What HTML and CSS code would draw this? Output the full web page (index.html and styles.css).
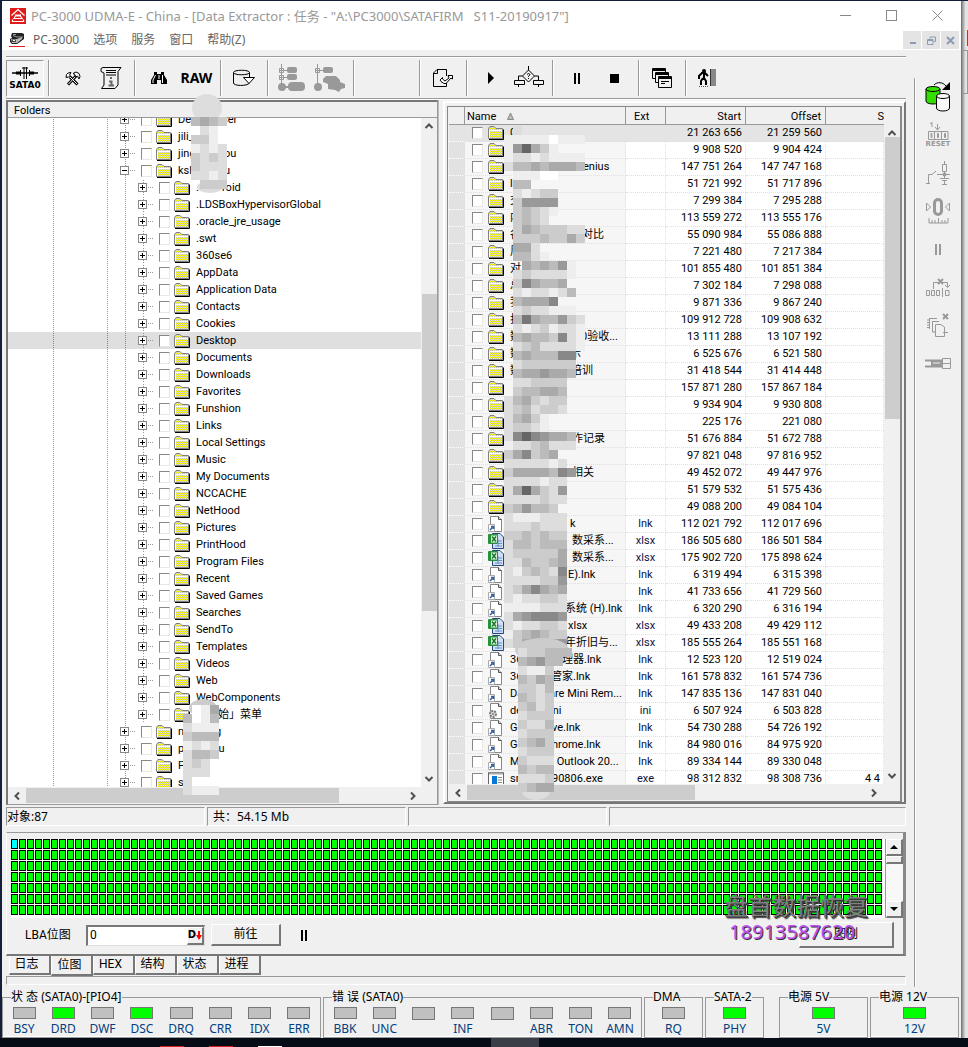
FILE: index.html
```
<!DOCTYPE html>
<html lang="zh-CN">
<head>
<meta charset="utf-8">
<title>PC-3000 UDMA-E</title>
<link rel="stylesheet" href="styles.css">
</head>
<body>
<svg class="defs" aria-hidden="true">
  <defs>
    <pattern id="dither" width="2" height="2" patternUnits="userSpaceOnUse"><rect width="2" height="2" fill="#c8c8b8"/><rect width="1" height="1" fill="#ffff00"/><rect x="1" y="1" width="1" height="1" fill="#ffff00"/></pattern>
    <pattern id="cells" width="8" height="11" patternUnits="userSpaceOnUse"><rect width="7" height="10" fill="#000"/><rect x="1" y="1" width="5" height="8" fill="#00ff00"/></pattern>
    <symbol id="folder" viewBox="0 0 16 14"><path d="M1 13.500H15.500V3.500" fill="none" stroke="#000" stroke-width="1"/><path d="M.5 12.500V2.500L2 .5H6L8 2.500H14.500V12.500Z" fill="url(#dither)" stroke="#808080"/><path d="M1.500 12V4.500H14" fill="none" stroke="#fff"/></symbol>
    <symbol id="lnk" viewBox="0 0 16 16"><path d="M2.500.5H10.500L13.500 3.500V15.500H2.500Z" fill="#fff" stroke="#888"/><path d="M10.500.5V3.500H13.500" fill="#ddd" stroke="#555"/><path d="M.5 8.500H6.500V15.500H.5Z" fill="#fff" stroke="#aaa"/><path d="M2 14 4.500 11.500M3 10.500H5.500V13" fill="none" stroke="#2c5fa8" stroke-width="1.500"/></symbol>
    <symbol id="ini" viewBox="0 0 16 16"><path d="M2.500.5H10.500L13.500 3.500V15.500H2.500Z" fill="#fff" stroke="#888"/><path d="M10.500.5V3.500H13.500" fill="#ddd" stroke="#555"/><circle cx="5" cy="11" r="3" fill="#ddd" stroke="#777" stroke-width="2" stroke-dasharray="2 1"/><circle cx="5" cy="11" r="1" fill="#777"/></symbol>
    <symbol id="xlsx" viewBox="0 0 16 16"><path d="M4.500.5H12L15.500 4V15.500H4.500Z" fill="#cfe0f7" stroke="#27457f"/><path d="M7 8H14M7 10.500H14M7 13H14M10 6V14" stroke="#6b8fc7"/><rect x="0" y="1" width="10" height="10" rx="1" fill="#27913a"/><rect x="3" y="2.500" width="6" height="7" fill="#e5f3e3"/><path d="M4 3.500 8 8.500M8 3.500 4 8.500" stroke="#17772a" stroke-width="1.500"/></symbol>
    <symbol id="exe" viewBox="0 0 16 14"><path d="M.5.5H15.500V13.500H.5Z" fill="#fff" stroke="#666"/><path d="M1 1.500H15" stroke="#aaa" stroke-width="2"/><rect x="4" y="4" width="5" height="8" fill="#0878d8"/><path d="M10 5.500H14M10 8H14M10 10.500H14" stroke="#888"/></symbol>
    <symbol id="up" viewBox="0 0 10 8"><path d="M1.500 6 5 2.500 8.500 6" fill="none" stroke="#505050" stroke-width="2"/></symbol>
    <symbol id="down" viewBox="0 0 10 8"><path d="M1.500 2 5 5.500 8.500 2" fill="none" stroke="#505050" stroke-width="2"/></symbol>
    <symbol id="left" viewBox="0 0 8 10"><path d="M6 1.500 2.500 5 6 8.500" fill="none" stroke="#505050" stroke-width="2"/></symbol>
    <symbol id="right" viewBox="0 0 8 10"><path d="M2 1.500 5.500 5 2 8.500" fill="none" stroke="#505050" stroke-width="2"/></symbol>
  </defs>
</svg>

<div class="desktop">
<div class="window">
  <header class="titlebar">
    <svg class="logo" width="16" height="16" viewBox="0 0 16 16"><rect width="16" height="16" fill="#e01b1b"/><path d="M1.500 7.500 8 1.500 14.500 7.500M5 7H11M4 10.500 5.500 8H10.500L12 10.500ZM2 13.500H14M3 11.500 2 13.500M13 11.500 14 13.500" fill="none" stroke="#fff" stroke-width="1.200"/></svg>
    <h1 class="title">PC-3000 UDMA-E - China - [Data Extractor : 任务 - "A:\PC3000\SATAFIRM   S11-20190917"]</h1>
    <button class="wbtn" aria-label="Minimize"><svg width="11" height="11"><path d="M0 5.500H11" stroke="#888"/></svg></button>
    <button class="wbtn" aria-label="Maximize"><svg width="11" height="11"><rect x=".5" y=".5" width="10" height="10" fill="none" stroke="#888"/></svg></button>
    <button class="wbtn" aria-label="Close"><svg width="11" height="11"><path d="M.5.5 10.500 10.500M10.500.5.5 10.500" stroke="#888"/></svg></button>
  </header>
  <nav class="menubar">
    <svg class="logo" width="16" height="16" viewBox="0 0 16 16"><path d="M3 1H13L15 2V7L11 10L8 12H3L1 10V7L3 6L2 4Z" fill="#222"/><path d="M4 3.500 8 5H14M4 2.500H7" fill="none" stroke="#999"/><path d="M2 7H8L13 5V7L8 11H3Z" fill="#bbb"/><path d="M3 7.500H7V10H3Z" fill="#444"/><path d="M4 8.500H6" stroke="#fff"/><path d="M0 14.500H16" stroke="#e02020"/></svg>
    <button class="menu">PC-3000</button><button class="menu">选项</button><button class="menu">服务</button><button class="menu">窗口</button><button class="menu">帮助(Z)</button>
    <span class="grow"></span>
    <button class="mdi" aria-label="Minimize document"><svg width="9" height="9"><path d="M2 7H8" stroke="#8c9bb5" stroke-width="2"/></svg></button>
    <button class="mdi" aria-label="Restore document"><svg width="9" height="9"><path d="M3 2.500V1H8.500V5.500H7M.5 3.500H6V8.500H.5ZM.5 4.500H6" fill="none" stroke="#8c9bb5"/></svg></button>
    <button class="mdi" aria-label="Close document"><svg width="9" height="9"><path d="M1 1 8 8M8 1 1 8" stroke="#8c9bb5" stroke-width="2"/></svg></button>
  </nav>

  <div class="body">
    <main class="main">
      <div class="toolbar">
        <div class="group first"><button class="tool pressed sata"><svg width="28" height="14" viewBox="0 0 28 14"><path d="M1 7H27" stroke="#000" stroke-width="1.500"/><path d="M5 7H10M18 7H23" stroke="#000" stroke-width="3"/><path d="M9.500 4V10M18.500 4V10" stroke="#000"/><path d="M13 1V13M15.500 1V13M11 2H17" stroke="#000"/></svg><span>SATA0</span></button></div>
        <div class="group pair">
          <button class="tool" aria-label="Tools"><svg width="16" height="15" viewBox="0 0 16 15"><path d="M3 13.500 11 5M12.500 13.500 5 6" stroke="#000" stroke-width="3"/><path d="M3.500 13 11 5M12 13 5 6" stroke="#fff"/><path d="M1 6.500 1.500 3.500 3 2 6 1.500 4.500 4 6 5.500 3.500 6ZM8 2.500 11 1 14 2.500 15 5.500 14 8 12.500 5 10.500 6 10 3.500Z" fill="#fff" stroke="#000"/></svg></button>
          <button class="tool" aria-label="Information"><svg width="22" height="24" viewBox="0 0 22 24"><path d="M3 1.500H21L18 5.500V19L15 22.500H1.500L4 19V7L1 5.500V2.500Z" fill="none" stroke="#000"/><path d="M6 4.500H16M6 6.500H16M6 9H16" stroke="#000"/><path d="M11 11V13M9 15.500H11.500V19M8.500 19.500H14" fill="none" stroke="#666" stroke-width="2"/></svg></button>
        </div>
        <div class="group pair">
          <button class="tool" aria-label="Find"><svg width="16" height="14" viewBox="0 0 16 14"><path d="M3 1H6V3H10V1H13V4L16 9V13H10V9H6V13H0V9L3 4Z" fill="#000"/><path d="M4.500 4 2 9V12M11.500 4V12M8 4V8" fill="none" stroke="#fff"/></svg></button>
          <button class="tool raw">RAW</button>
        </div>
        <div class="group single"><button class="tool" aria-label="Disk image"><svg width="24" height="18" viewBox="0 0 24 18"><path d="M17.500 8V3.500C17.500.5 1.500.5 1.500 3.500V14C1.500 17 15 17.500 17.500 14M1.500 3.500C1.500 6.500 17.500 6.500 17.500 3.500" fill="none" stroke="#000"/><path d="M11.500 8.500H22.500L17 14.500Z" fill="#fff" stroke="#000"/></svg></button></div>
        <div class="group pair">
          <button class="tool" aria-label="Map of folder"><svg width="27" height="28" viewBox="0 0 27 28"><path d="M3.500 0V22M1 6.500H10M1 13.500H10M1.500 4.500H5.500V8.500H1.500ZM1.500 11.500H5.500V15.500H1.500Z" fill="none" stroke="#999"/><g fill="#999"><circle cx="4" cy="23" r="4"/><rect x="9" y="3" width="10" height="6" rx="2"/><rect x="9" y="10" width="10" height="6" rx="2"/><rect x="10" y="18" width="17" height="9" rx="4"/><path d="M4 22H12V24H4Z"/></g></svg></button>
          <button class="tool" aria-label="Map of objects"><svg width="32" height="28" viewBox="0 0 32 28"><path d="M3.500 0V22M1 6.500H10M1.500 4.500H5.500V8.500H1.500Z" fill="none" stroke="#999"/><g fill="#999"><circle cx="4" cy="23" r="4"/><rect x="9" y="3" width="10" height="6" rx="2"/><path d="M9 15 12 12H22L26 16V18L31 20V24L27 25 25 28 21 26 14 25V20L9 18Z"/></g></svg></button>
        </div>
        <div class="group blank"></div>
        <div class="group single"><button class="tool" aria-label="Export"><svg width="22" height="20" viewBox="0 0 22 20"><path d="M14.500 8V1.500H5L1.500 5V18.500H14.500V15M1.500 5.500H5.500V1.500" fill="none" stroke="#000"/><path d="M8 12 10.500 9.500V11L13 13 17 10 16 7.500H20.500V11L19 10 14 15.500H12L10.500 14.500V15Z" fill="#fff" stroke="#000"/></svg></button></div>
        <div class="group pair">
          <button class="tool" aria-label="Start"><svg width="8" height="12"><path d="M1 0 7 6 1 12Z" fill="#000"/></svg></button>
          <button class="tool" aria-label="Choose"><svg width="32" height="24" viewBox="0 0 32 24"><path d="M15.500 0V4M15.500 4 21.500 10 15.500 16 9.500 10ZM9.500 10H5.500V14M21.500 10H25.500V14M1.500 14.500H11.500V18.500H1.500ZM20.500 14.500H30.500V18.500H20.500ZM5.500 19V21M25.500 19V21" fill="none" stroke="#000"/><path d="M14 8.500 15.500 7.500 17 8.500 15.500 10.500V11M15.500 12V13" fill="none" stroke="#000"/></svg></button>
        </div>
        <div class="group pair">
          <button class="tool" aria-label="Pause"><svg width="8" height="11"><path d="M1 0H3V11H1ZM5 0H7V11H5Z" fill="#000"/></svg></button>
          <button class="tool" aria-label="Stop"><svg width="9" height="9"><rect width="9" height="9"/></svg></button>
        </div>
        <div class="group single"><button class="tool" aria-label="Windows"><svg width="20" height="20" viewBox="0 0 20 20"><g fill="#f0f0f0" stroke="#000"><path d="M.5.5H13.500V10.500H.5Z"/><path d="M0 2H14" stroke-width="2"/><path d="M3.500 4.500H16.500V14.500H3.500Z"/><path d="M3 6H17" stroke-width="2"/><path d="M6.500 8.500H19.500V19.500H6.500Z"/><path d="M6 10H20" stroke-width="2"/><path d="M9 13.500H17M9 15.500H13"/></g></svg></button></div>
        <div class="group last"><button class="tool" aria-label="Exit"><svg width="20" height="20" viewBox="0 0 20 20"><circle cx="6" cy="3" r="2"/><path d="M3 5H7L10 8M6 5V10L8 13V17M5 10 3 13V17M4 5 1 8V11" fill="none" stroke="#000" stroke-width="2"/><path d="M12 1H18V18H12Z" fill="#888"/><path d="M12.500 1V18" stroke="#333"/><path d="M1 18.500H10" stroke="#555" stroke-dasharray="1 1"/></svg></button></div>
      </div>

      <div class="panes">
        <section class="pane tree-pane">
          <h2 class="pane-head">Folders</h2>
          <div class="view"><ul class="tree" id="tree"></ul>
            <div class="vbar"><svg width="10" height="8"><use href="#up"/></svg><i class="space a"></i><i class="thumb b"></i><i class="space c"></i><svg width="10" height="8"><use href="#down"/></svg></div>
          </div>
          <div class="hbar"><svg width="8" height="10"><use href="#left"/></svg><i class="thumb d"></i><i class="space e"></i><svg width="8" height="10"><use href="#right"/></svg></div>
          <svg class="mosaic tree-top" id="mosaicA"></svg>
          <svg class="mosaic tree-end" id="mosaicB"></svg>
        </section>
        <section class="pane list-pane">
          <div class="list-frame">
            <div class="view">
              <div class="clip"><table class="files">
                <colgroup><col class="c0"><col class="c1"><col class="c2"><col class="c3"><col class="c3"><col></colgroup>
                <thead><tr><th></th><th class="name">Name <svg width="7" height="8"><path d="M3.500 1 6.500 7.500H.5Z" fill="#bbb" stroke="#888"/></svg></th><th class="ext">Ext</th><th>Start</th><th>Offset</th><th class="cut">S</th></tr></thead>
                <tbody id="files"></tbody>
              </table></div>
              <div class="vbar low"><svg width="10" height="8"><use href="#up"/></svg><i class="thumb f"></i><i class="space g"></i><svg width="10" height="8"><use href="#down"/></svg></div>
            </div>
            <div class="hbar"><svg width="8" height="10"><use href="#left"/></svg><i class="thumb h"></i><i class="space i"></i><svg width="8" height="10"><use href="#right"/></svg></div>
          </div>
          <svg class="mosaic list-m" id="mosaicC"></svg>
          <svg class="mosaic list-n" id="mosaicD"></svg>
        </section>
      </div>

      <div class="status"><span>对象:87</span><span class="total">共：54.15 Mb</span><span></span><span class="rest"></span></div>

      <section class="mapbox">
        <div class="maprow">
          <svg class="map" width="100%" height="79"><rect width="872" height="77" fill="url(#cells)"/><rect x="1" y="1" width="5" height="8" fill="#00ffff"/></svg>
          <div class="oldbar"><button aria-label="Scroll up"><svg width="8" height="4"><path d="M0 4 4 0 8 4Z"/></svg></button><i class="oldthumb"></i><i class="grow"></i><button aria-label="Scroll down"><svg width="8" height="4"><path d="M0 0 4 4 8 0Z"/></svg></button></div>
        </div>
        <div class="controls">
          <label for="lba">LBA位图</label>
          <div class="field"><input id="lba" type="text" value="0"><button class="dbtn" aria-label="Decimal">D<svg width="6" height="9"><path d="M2 0H4V4H6L3 9 0 4H2Z" fill="#f00"/></svg></button></div>
          <button class="raised go">前往</button>
          <button class="hold" aria-label="Pause map"><svg width="8" height="11"><path d="M1 0H3V11H1ZM5 0H7V11H5Z" fill="#000"/></svg></button>
          <span class="grow"></span>
          <button class="raised legend">图例</button>
        </div>
        <div class="watermark"><strong>盘首数据恢复</strong><em>18913587620</em></div>
      </section>
      <div class="tabs"><button>日志</button><button class="on">位图</button><button>HEX</button><button>结构</button><button>状态</button><button>进程</button></div>
      <div class="strip"></div>
    </main>

    <aside class="side">
      <button aria-label="Power"><svg width="26" height="30" viewBox="0 0 26 30"><path d="M1 7V19C1 23 15 23 15 19V7" fill="#33dd00" stroke="#000"/><ellipse cx="8" cy="7" rx="7" ry="2.500" fill="#33dd00" stroke="#000"/><path d="M11.500 14V26C11.500 30 24.500 30 24.500 26V14" fill="#f8f8f8" stroke="#000"/><ellipse cx="18" cy="14" rx="6.500" ry="2.500" fill="#f8f8f8" stroke="#000"/><path d="M9 3C12-.5 18 0 21 4" fill="none" stroke="#000"/><path d="M25 0V8H17Z"/></svg></button>
      <button class="reset"><svg width="22" height="18" viewBox="0 0 22 18"><path d="M3 2 5 .5V5M10.500 2V8M8 5 10.500 8 13 5M1.500 9.500H21V17.500H1.500ZM7.500 9V18M14.500 9V18M4 11.500H5V15.500H4ZM10.500 11.500H11.500V15.500H10.500ZM17.500 11.500H18.500V15.500H17.500Z" fill="none" stroke="#999"/></svg><span>RESET</span></button>
      <button aria-label="Relay"><svg width="24" height="24" viewBox="0 0 24 24"><path d="M0 22.500H4M2.500 22V13.500H6L10 10M11 13.500H24M18.500 0V3M16.500 3.500H20.500V10.500H16.500ZM18.500 10V17M14 17.500H23M16 19.500H21M18.500 20V23M16 23.500H21" fill="none" stroke="#999" /><circle cx="18.500" cy="13.500" r="2" fill="#999"/></svg></button>
      <button aria-label="Calibrate"><svg width="24" height="26" viewBox="0 0 24 26"><rect x="8.500" y="1.500" width="7" height="15" rx="3.500" fill="none" stroke="#999" stroke-width="3"/><path d="M.5 5V13L4.500 9ZM23.500 5V13L19.500 9ZM3 20V25M3 25H22M22 20V25M6 22V25M9 22V25M12.500 20V25M16 22V25M19 22V25" fill="none" stroke="#999"/></svg></button>
      <button aria-label="Pause device"><svg width="8" height="11"><path d="M1 0H3V11H1ZM5 0H7V11H5Z" fill="#999"/></svg></button>
      <button aria-label="Skip"><svg width="25" height="19" viewBox="0 0 25 19"><path d="M7.500 11V4.500H21.500V9M19 7 21.500 9.500 24 7M.5 12.500H3.500V17.500H.5ZM5.500 12.500H8.500V17.500H5.500ZM10.500 12.500H13.500V17.500H10.500ZM16.500 10V19M19.500 12.500H23V17.500H19.500Z" fill="none" stroke="#999"/><path d="M12 1 17 6M17 1 12 6" stroke="#999" stroke-width="2"/></svg></button>
      <button aria-label="Copy"><svg width="24" height="24" viewBox="0 0 24 24"><path d="M3 5.500H11M3.500 5V16M1 7H3M1 9.500H3M1 12H3M1 14.500H3M6 8.500H13M6.500 8V19H9M9.500 11.500H15L18.500 14V23.500H9.500ZM17 19.500H22" fill="none" stroke="#999"/><path d="M17 1 22 6M22 1 17 6" stroke="#999" stroke-width="2"/></svg></button>
      <button aria-label="Connector"><svg width="27" height="13" viewBox="0 0 27 13"><path d="M0 3.500H17M0 9.500H17" stroke="#999" stroke-width="2"/><path d="M6 3H17V10H6Z" fill="#999"/><path d="M8 6H15" stroke="#f0f0f0"/><path d="M17.500 1.500H25.500V11.500H17.500ZM17 6.500H26" fill="none" stroke="#999"/></svg></button>
    </aside>
  </div>

  <footer class="lamps">
    <fieldset class="w8"><legend>状 态 (SATA0)-[PIO4]</legend><span class="lamp">BSY</span><span class="lamp lit">DRD</span><span class="lamp">DWF</span><span class="lamp lit">DSC</span><span class="lamp">DRQ</span><span class="lamp">CRR</span><span class="lamp">IDX</span><span class="lamp">ERR</span></fieldset>
    <fieldset class="w8"><legend>错 误 (SATA0)</legend><span class="lamp">BBK</span><span class="lamp">UNC</span><span class="lamp"></span><span class="lamp">INF</span><span class="lamp"></span><span class="lamp">ABR</span><span class="lamp">TON</span><span class="lamp">AMN</span></fieldset>
    <fieldset class="w1"><legend>DMA</legend><span class="lamp">RQ</span></fieldset>
    <fieldset class="w1"><legend>SATA-2</legend><span class="lamp lit">PHY</span></fieldset>
    <span class="spacer"></span>
    <fieldset class="w2"><legend>电源 5V</legend><span class="lamp lit">5V</span></fieldset>
    <fieldset class="w2"><legend>电源 12V</legend><span class="lamp lit">12V</span></fieldset>
  </footer>
</div>
<div class="behind"><i class="mark"></i><i class="ledge"></i></div>
</div>
<div class="taskbar"><i class="red"></i><i class="red"></i><i class="white"></i><i class="active"></i></div>
<script src="app.js"></script>
</body>
</html>
```
FILE: styles.css
```
* { box-sizing: border-box; }
body { margin: 0; height: 100vh; display: flex; flex-direction: column; overflow: hidden; background: #08101c; font: 11px/17px Roboto, "Liberation Sans", "Noto Sans CJK SC", sans-serif; color: #000; }
button { font: inherit; color: inherit; background: none; border: 0; padding: 0; margin: 0; display: flex; align-items: center; justify-content: center; }
svg { display: block; flex: none; }
h1, h2, ul { margin: 0; padding: 0; font-weight: normal; list-style: none; }
i { display: block; }
.defs { position: absolute; width: 0; height: 0; }
.grow { flex: 1; }

.desktop { flex: 1; min-height: 0; display: flex; padding: 1px 0 0 2px; background: #14203a; }
.window { flex: 1; min-width: 0; display: flex; flex-direction: column; background: #f0f0f0; }
.behind { width: 7px; background: linear-gradient(90deg, #8c8c8c, #e4e4e4 60%); border-left: 1px solid #777; padding-top: 29px; }
.mark { height: 16px; margin-left: 5px; background: #e02020; }
.ledge { height: 44px; margin-top: 4px; border: solid #999; border-width: 1px 1px 1px 0; }
.taskbar { height: 9px; background: #060c16; display: flex; align-items: flex-end; padding-left: 160px; gap: 25px; }
.taskbar .red { width: 24px; height: 1px; background: #d02020; }
.taskbar .white { width: 24px; height: 1px; background: #fff; }
.taskbar .active { width: 48px; height: 9px; background: #3a3f47; margin-left: 184px; }

.titlebar { height: 29px; display: flex; align-items: center; padding: 0 1px 0 8px; background: #fff; color: #999; }
.title { flex: 1; margin-left: 5px; font: 13px/28px "Noto Sans", "Noto Sans CJK SC", sans-serif; white-space: pre; }
.wbtn { width: 46px; height: 29px; }
.menubar { height: 20px; display: flex; align-items: center; padding: 0 2px 0 7px; background: #fff; color: #666; font: 12px/20px "Noto Sans", "Noto Sans CJK SC", sans-serif; }
.menu { margin-left: 14px; }
.menu:nth-of-type(1) { margin-left: 8px; }
.mdi { width: 18px; height: 18px; margin-left: 1px; background: #e4e4e4; }

.body { flex: 1; min-height: 0; display: flex; }
.main { flex: 1; min-width: 0; display: flex; flex-direction: column; padding: 6px 8px 0 4px; }
.toolbar { height: 43px; display: flex; align-items: stretch; border-top: 1px solid #999; border-bottom: 1px solid #999; padding: 3px 0 2px; box-shadow: inset 0 1px #fff, 0 1px #fff; }
.group { display: flex; align-items: center; justify-content: center; border-right: 1px solid #999; box-shadow: 1px 0 #fff; }
.tool { width: 38px; height: 37px; }
.first { width: 43px; justify-content: flex-start; }
.pair { width: 86px; }
.single { width: 47px; }
.blank { width: 66px; }
.last { border: 0; box-shadow: none; width: 43px; }
.pressed { border: 1px solid #999; border-right-color: #fff; border-bottom-color: #fff; background: #f4f4f4; }
.sata { flex-direction: column; font: bold 9px/11px "DejaVu Sans", sans-serif; }
.raw { font: bold 14px/20px "Noto Sans", sans-serif; }

.panes { flex: 1; min-height: 0; display: flex; gap: 5px; padding-top: 1px; }
.pane { position: relative; display: flex; flex-direction: column; min-width: 0; }
.tree-pane { flex: 432 1 432px; border: 2px solid #777; border-right: 1px solid #999; border-bottom: 1px solid #999; background: #fff; box-shadow: 1px 0 #bbb; }
.pane-head { height: 16px; padding-left: 6px; background: #f0f0f0; border-bottom: 1px solid #999; font-size: 11px; line-height: 18px; }
.view { flex: 1; min-height: 0; display: flex; overflow: hidden; }
.tree { flex: 1; min-width: 0; margin-top: -7px; background: linear-gradient(#999 50%, transparent 50%) 45px 0 / 1px 2px repeat-y, linear-gradient(#999 50%, transparent 50%) 99px 0 / 1px 2px repeat-y, linear-gradient(#999 50%, transparent 50%) 117px 0 / 1px 2px repeat-y; }
.tree li { height: 17px; display: flex; align-items: center; padding-left: 112px; white-space: pre; }
.tree li.sub { padding-left: 130px; background: linear-gradient(#999 50%, transparent 50%) 135px 1px / 1px 2px repeat-y; }
.tree li.selected { background-color: #00000020; }
.box { width: 9px; height: 9px; background: #fff; border: 1px solid #888; }
.stub { width: 6px; height: 1px; margin-right: 6px; background: linear-gradient(90deg, #999 50%, transparent 50%) 1px 0 / 2px 1px; }
.row { display: flex; align-items: center; flex: 1; min-width: 0; }
input[type=checkbox] { appearance: none; flex: none; width: 11px; height: 12px; margin: 0; background: #fff; border: 1px solid #e8e8e8; border-top-color: #888; border-left-color: #888; }
.tree .row svg { margin: 0 6px 0 4px; }
.pre { display: inline-block; flex: none; }

.vbar { width: 16px; flex: none; display: flex; flex-direction: column; align-items: center; background: #f0f0f0; padding: 4px 0; }
.vbar .thumb { width: 15px; margin: 0; }
.low { margin-top: 18px; }
.thumb { background: #cdcdcd; }
.hbar { height: 17px; display: flex; align-items: center; background: #f0f0f0; padding: 0 5px; }
.hbar .thumb { height: 15px; }
.a { flex: 161; } .b { flex: 313; } .c { flex: 161; }
.d { flex: 312; margin-left: 5px; } .e { flex: 70; }
.tree-pane .hbar { padding-right: 20px; }
.f { flex: 279; margin-top: 4px; } .g { flex: 350; }
.h { flex: 228; margin-left: 5px; } .i { flex: 175; }
.list-pane .hbar { padding-right: 22px; }

.list-pane { flex: 463 1 463px; border: 2px solid #fff; border-right-color: #777; border-bottom-color: #777; padding: 3px 2px 0; margin: 1px 0; }
.list-frame { flex: 1; min-height: 0; display: flex; flex-direction: column; border: 1px solid #888; border-width: 1px 2px 1px 1px; padding-left: 1px; background: #f0f0f0; }
.clip { flex: 1; min-width: 0; overflow: hidden; background: #fff; }
.files { width: 100%; table-layout: fixed; border-collapse: separate; border-spacing: 0; line-height: 16px; }
.c0 { width: 16px; } .c1 { width: 161px; } .c2 { width: 40px; } .c3 { width: 80px; }
.files th { height: 18px; padding: 2px 4px 0 2px; line-height: 15px; background: #f0f0f0; border-right: 1px solid #999; border-bottom: 1px solid #999; font-weight: normal; text-align: right; }
.files th.name { text-align: left; }
.name svg { display: inline-block; margin-left: 8px; }
.files th.ext { text-align: left; padding-left: 8px; }
.files th.cut { border-right: 0; padding: 2px 0 0; overflow: hidden; }
.files td { height: 17px; padding: 0 3px 0 0; border-right: 1px dotted #e0e0e0; border-bottom: 1px dotted #e0e0e0; text-align: right; white-space: pre; overflow: hidden; }
.files td:first-child { background: #e2e2e2; border-bottom-color: #fff; }
.files td.name { background: #f6f6f6; padding: 0; text-align: left; }
.files td.ext { text-align: center; padding: 0; color: #101040; }
.files tr.selected td { background: #e4e4e4; }
.files .row { height: 16px; padding-left: 7px; }
.files .row svg { margin: 0 6px 0 5px; }

.mosaic { position: absolute; overflow: visible; pointer-events: none; width: 90px; height: 90px; }
.tree-top { left: 183px; top: 15px; }
.tree-end { left: 175px; bottom: 18px; }
.list-m { left: 59px; top: 23px; }
.list-n { left: 73px; top: 545px; }

.status { height: 21px; margin-top: 2px; display: flex; gap: 2px; font-size: 12px; font-family: "Noto Sans", "Noto Sans CJK SC", sans-serif; }
.status span { height: 19px; flex: 199 1 199px; border: 1px solid #999; border-right-color: #fff; border-bottom-color: #fff; line-height: 17px; }
.status .rest { flex: 297 1 297px; }
.status .total { padding-left: 5px; }
.mapbox { position: relative; margin-top: 4px; border: 1px solid #fff; border-top-color: #999; border-right: 3px solid #888; border-bottom: 2px solid #777; padding: 6px 0 2px 4px; }
.maprow { display: flex; background: #fff; }
.map { flex: 1; min-width: 0; }
.oldbar { width: 18px; flex: none; display: flex; flex-direction: column; border-left: 1px solid #999; background: #f8f8f8; }
.oldbar button { height: 17px; }
.oldbar button, .oldthumb, .raised, .dbtn { background: #f0f0f0; border: 1px solid #fff; border-right: 2px solid #777; border-bottom: 2px solid #777; }
.oldthumb { height: 8px; }
.controls { display: flex; align-items: center; height: 34px; padding: 0 9px 0 14px; font-size: 12px; }
.controls label { width: 61px; }
.field { width: 119px; height: 21px; display: flex; background: #fff; border: 2px solid #777; border-right: 1px solid #ddd; border-bottom: 1px solid #ddd; }
.field input { flex: 1; min-width: 0; border: 0; padding: 0 2px; font: inherit; background: none; }
.dbtn { width: 17px; font: bold 10px/12px "DejaVu Sans", sans-serif; }
.raised { height: 22px; }
.go { width: 70px; margin-left: 6px; }
.hold { width: 20px; margin-left: 13px; }
.legend { width: 95px; height: 26px; }
.watermark { position: absolute; right: 35px; bottom: 10px; display: flex; flex-direction: column; align-items: center; font-family: "Noto Sans", "Noto Sans CJK SC", sans-serif; pointer-events: none; }
.watermark strong { font-size: 24px; line-height: 28px; font-weight: normal; color: #808080; text-shadow: 1px 1px #333, 2px 2px 1px #444; }
.watermark em { font-size: 20px; line-height: 24px; font-style: normal; color: #c050f0; text-shadow: 1px 1px #333; margin-right: 8px; }
.tabs { display: flex; align-items: flex-start; height: 20px; padding-left: 3px; font-size: 12px; }
.tabs button { width: 42px; height: 19px; border-right: 2px solid #777; border-bottom: 2px solid #777; border-left: 1px solid #fff; padding-right: 6px; }
.tabs .on { height: 20px; padding-right: 4px; }
.strip { height: 9px; margin-bottom: 4px; border: 1px solid #999; border-right-color: #fff; border-bottom-color: #fff; }

.side { width: 47px; margin: 28px 0 2px; border-left: 1px solid #999; box-shadow: inset 1px 0 #fff; display: flex; flex-direction: column; align-items: center; }
.side button { width: 40px; height: 38px; }
.reset { flex-direction: column; font: bold 7px/8px "DejaVu Sans", sans-serif; color: #999; }

.lamps { display: flex; gap: 2px; align-items: flex-end; padding-right: 2px; font: 12px/16px "Noto Sans", "Noto Sans CJK SC", sans-serif; }
fieldset { display: flex; justify-content: space-between; min-width: 0; margin: 0; height: 49px; padding: 2px 2px 0; border: 1px solid #999; box-shadow: inset 0 -1px #fff; }
legend { padding: 0; margin-left: 6px; line-height: 16px; white-space: nowrap; }
.w8 { flex: 319 1 319px; } .w1 { flex: 59 1 59px; } .w2 { flex: 89 1 89px; }
.w1, .w2 { justify-content: center; }
.spacer { flex: 11 1 11px; }
.lamp { width: 38px; display: flex; flex-direction: column; align-items: center; color: #004080; }
.lamp::before { content: ""; width: 21px; height: 11px; margin-bottom: 2px; background: #c0c0c0; border: 1px solid #777; }
.lit::before { background: #00ff00; }
```
FILE: app.js
```
const icon = (name, w, h) => `<svg width="${w}" height="${h}"><use href="#${name}"/></svg>`;
const label = (pre, gap, rest) => gap ? `<span class="pre" style="width:${gap}px">${pre}</span><span>${rest}</span>` : `<span>${pre}</span>`;

// name, hidden gap width, remainder
const outerTop = [["De", 44, "ser"], ["jili_"], ["jing", 46, "ou"], ["ksl", 46, "u"]];
const inner = [[".", 26, "roid"], ...(".LDSBoxHypervisorGlobal|.oracle_jre_usage|.swt|360se6|AppData|Application Data|Contacts|Cookies|Desktop|Documents|Downloads|Favorites|Funshion|Links|Local Settings|Music|My Documents|NCCACHE|NetHood|Pictures|PrintHood|Program Files|Recent|Saved Games|Searches|SendTo|Templates|Videos|Web|WebComponents").split("|").map(n => [n]), ["「", 11, "开始」菜单"]];
const outerEnd = [["m", 37, "g"], ["p", 35, "ku"], ["F"], ["s"]];
const node = (n, cls, open) => `<li class="${cls}"><button class="box" aria-label="Expand"><svg width="7" height="7"><path d="M1 3.500H6${open ? "" : "M3.500 1V6"}" stroke="#000"/></svg></button><i class="stub"></i><label class="row"><input type="checkbox">${icon("folder", 16, 14)}${label(...n)}</label></li>`;
document.getElementById("tree").innerHTML =
  outerTop.map((n, i) => node(n, "", i === 3)).join("") +
  inner.map(n => node(n, n[0] === "Desktop" ? "sub selected" : "sub")).join("") +
  outerEnd.map(n => node(n, "")).join("");

const files = [
  ["0", 0, "", "", 21263656], ["", 0, "", "", 9908520], ["", 73, "enius", "", 147751264], ["l", 0, "", "", 51721992],
  ["交", 0, "", "", 7299384], ["内", 0, "", "", 113559272], ["各", 72, "对比", "", 55090984], ["周", 0, "", "", 7221480],
  ["对", 0, "", "", 101855480], ["总", 0, "", "", 7302184], ["我", 0, "", "", 9871336], ["打", 71, ".", "", 109912728],
  ["数", 71, "0验收...", "", 13111288], ["数", 60, "示", "", 6525676], ["数", 61, "培训", "", 31418544], ["", 0, "", "", 157871280],
  ["", 0, "", "", 9934904], ["", 0, "", "", 225176], ["", 62, "作记录", "", 51676884], ["", 0, "", "", 97821048],
  ["", 62, "相关", "", 49452072], ["", 0, "", "", 51579532], ["", 0, "", "", 49088200],
  ["", 60, "k", "lnk", 112021792], ["", 62, "数采系...", "xlsx", 186505680], ["", 62, "数采系...", "xlsx", 175902720],
  ["", 58, "E).lnk", "lnk", 6319494], ["", 0, "", "lnk", 41733656], ["", 55, "系统 (H).lnk", "lnk", 6320290],
  ["", 58, "xlsx", "xlsx", 49433208], ["20", 55, "年折旧与...", "xlsx", 185555264], ["36", 41, "管理器.lnk", "lnk", 12523120],
  ["36", 41, "管家.lnk", "lnk", 161578832], ["Da", 39, "are Mini Rem...", "lnk", 147835136], ["des", 40, "ini", "ini", 6507924],
  ["Go", 42, "ve.lnk", "lnk", 54730288], ["Goo", 42, "hrome.lnk", "lnk", 84980016], ["Mic", 44, " Outlook 20...", "lnk", 89334144],
  ["sma", 42, "90806.exe", "exe", 98312832]
];
const spaced = n => String(n).replace(/\B(?=(\d{3})+$)/g, " ");
document.getElementById("files").innerHTML = files.map(([pre, gap, rest, ext, start], i) =>
  `<tr class="${i ? "" : "selected"}"><td></td><td class="name"><label class="row"><input type="checkbox">${icon(ext || "folder", 16, ext && ext !== "exe" ? 16 : 14)}${label(pre, gap, rest)}</label></td><td class="ext">${ext}</td><td>${spaced(start)}</td><td>${spaced(start - 4096)}</td><td>${i === 38 ? "4 4" : ""}</td></tr>`).join("");

// Privacy mosaic: each hex digit is the gray level of a 9px block.
const mosaic = (id, text, caps = "") => {
  const rects = text.split(" ").flatMap((line, y) => [...line].map((c, x) =>
    c === "." ? "" : `<rect x="${x * 9}" y="${y * 9}" width="9" height="9" fill="#${c}${c}${c}"/>`));
  document.getElementById(id).innerHTML = caps + rects.join("");
};
mosaic("mosaicA", "babc fde. cce. eded cdcd cddd dded .ccc", '<ellipse cx="16" cy="-9" rx="15" ry="14" fill="#ddd"/><ellipse cx="19" cy="70" rx="13" ry="6" fill="#ddd"/>');
mosaic("mosaicB", ".... .fea bfeb deee cbbb eded dbbc dcd. ddd. dff. deee", '<ellipse cx="20" cy="12" rx="14" ry="9" fill="#ccc"/>');
mosaic("mosaicC",
  ".d....... eeeeefeee e96ace... eddedeeee dbbabaaab .eeeff... .bb...... .dedcc... .c9999... .cbcde... .cbcd.... .cabcccdd .cccbccac .aad..... .bbde.... " +
  "..abab9e. .dcdddde. .c8abba.. .deddedb. .baaa8... .dcddeee. .b7abb9cd .dedcedde .babbc8de .dcbdddde .babbb88. .dcccccc. .baa9aab. .ddcccc.. .cbbaab.. " +
  "dbacdcc.. dcbdccd.. dbace.... dccde.... d8689aab. eddcbddd. ca8cba... ddddded.. caaaab89. ddddedd.. da6acd9.. ddddcdd.. cb9bbc... " +
  "deeeddd.. dddcddd.. ccbcbcc.. dbbcbbb.. dccccca.. ddbccba.. decbcd8.. ddddcc9.. dca8aba.. deddccd.. eeeeddd.. da98889.. deddccd.. ecbabcc.. dca99a9.. ..");
mosaic("mosaicD", "dccbbb ba9bb. deec bcab ccdb bcdc cbdc dccc cddb dccc cbac dccc cddd bcbb dddc cbaa", '<ellipse cx="18" cy="143" rx="14" ry="9" fill="#ddd"/><ellipse cx="24" cy="2" rx="27" ry="12" fill="#ccc"/>');
```
